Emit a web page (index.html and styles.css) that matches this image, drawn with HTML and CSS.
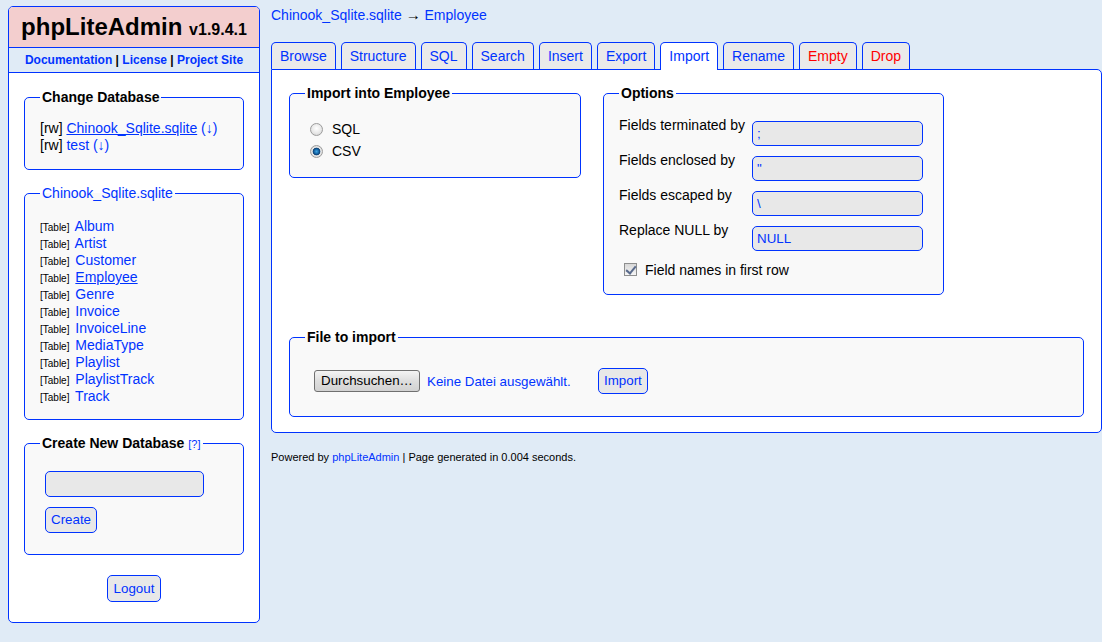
FILE: index.html
```html
<!DOCTYPE html>
<html>
    <head>
        <meta charset="UTF-8">
        <title>Chinook_Sqlite.sqlite - phpLiteAdmin</title>
        <link rel="stylesheet" href="styles.css">
    </head>
    <body>
        <div class="leftnav">
            <h1>phpLiteAdmin <span class="version">v1.9.4.1</span></h1>
            <div class="headerlinks"><a href="#">Documentation</a> | <a href="#">License</a> | <a href="#">Project Site</a></div>
            <div class="navbody">
                <fieldset>
                    <legend>Change Database</legend>
                    <div class="line">[rw] <a href="#" class="current">Chinook_Sqlite.sqlite</a> <a href="#">(<span class="arrow">&darr;</span>)</a></div>
                    <div class="line">[rw] <a href="#">test</a> <a href="#">(<span class="arrow">&darr;</span>)</a></div>
                </fieldset>

                <fieldset class="tables">
                    <legend class="plain"><a href="#">Chinook_Sqlite.sqlite</a></legend>
                    <div class="line"><span class="tag">[Table]</span> <a href="#">Album</a></div>
                    <div class="line"><span class="tag">[Table]</span> <a href="#">Artist</a></div>
                    <div class="line"><span class="tag">[Table]</span> <a href="#">Customer</a></div>
                    <div class="line"><span class="tag">[Table]</span> <a href="#" class="current">Employee</a></div>
                    <div class="line"><span class="tag">[Table]</span> <a href="#">Genre</a></div>
                    <div class="line"><span class="tag">[Table]</span> <a href="#">Invoice</a></div>
                    <div class="line"><span class="tag">[Table]</span> <a href="#">InvoiceLine</a></div>
                    <div class="line"><span class="tag">[Table]</span> <a href="#">MediaType</a></div>
                    <div class="line"><span class="tag">[Table]</span> <a href="#">Playlist</a></div>
                    <div class="line"><span class="tag">[Table]</span> <a href="#">PlaylistTrack</a></div>
                    <div class="line"><span class="tag">[Table]</span> <a href="#">Track</a></div>
                </fieldset>

                <fieldset class="newdb">
                    <legend>Create New Database <a href="#" class="help">[?]</a></legend>
                    <input type="text" class="newdb-input">
                    <button class="btn">Create</button>
                </fieldset>

                <div class="logout"><button class="btn">Logout</button></div>
            </div>
        </div>

        <div class="content">
            <div class="crumbs"><a href="#">Chinook_Sqlite.sqlite</a> <span class="arrow">&rarr;</span> <a href="#">Employee</a></div>

            <div class="tabs">
                <a href="#" class="tab">Browse</a>
                <a href="#" class="tab">Structure</a>
                <a href="#" class="tab">SQL</a>
                <a href="#" class="tab">Search</a>
                <a href="#" class="tab">Insert</a>
                <a href="#" class="tab">Export</a>
                <a href="#" class="tab active">Import</a>
                <a href="#" class="tab">Rename</a>
                <a href="#" class="tab warning">Empty</a>
                <a href="#" class="tab warning">Drop</a>
            </div>

            <div class="main">
                <div class="import-row">
                    <fieldset class="import-type">
                        <legend>Import into Employee</legend>
                        <label class="radio-row"><input type="radio" name="type" class="radio"> SQL</label>
                        <label class="radio-row"><input type="radio" name="type" class="radio" checked> CSV</label>
                    </fieldset>

                    <fieldset class="options">
                        <legend>Options</legend>
                        <div class="opt-grid">
                            <div class="opt-label">Fields terminated by</div>
                            <input type="text" class="opt-input" value=";">
                            <div class="opt-label">Fields enclosed by</div>
                            <input type="text" class="opt-input" value="&quot;">
                            <div class="opt-label">Fields escaped by</div>
                            <input type="text" class="opt-input" value="\">
                            <div class="opt-label">Replace NULL by</div>
                            <input type="text" class="opt-input" value="NULL">
                        </div>
                        <label class="check-row"><input type="checkbox" class="check" checked> Field names in first row</label>
                    </fieldset>
                </div>

                <fieldset class="file">
                    <legend>File to import</legend>
                    <div class="file-row">
                        <div class="filebox">
                            <span class="browse">Durchsuchen&hellip;</span>
                            <span class="nofile">Keine Datei ausgewählt.</span>
                        </div>
                        <button class="btn">Import</button>
                    </div>
                </fieldset>
            </div>

            <div class="footer">Powered by <a href="#">phpLiteAdmin</a> | Page generated in 0.004 seconds.</div>
        </div>
    </body>
</html>
```

FILE: styles.css
```css
*{
    box-sizing: border-box;
}
body{
    margin: 0;
    padding: 6px 0 0 8px;
    background-color: #e0ebf6;
    font-family: "Liberation Sans", Arial, sans-serif;
    font-size: 14px;
    color: #000;
    display: flex;
    align-items: flex-start;
    gap: 11px;
}
a{
    color: #03f;
    text-decoration: none;
}
a.current{
    text-decoration: underline;
}
.arrow{
    line-height: 1;
}

/* left navigation */
.leftnav{
    width: 252px;
    background-color: #fff;
    border: 1px solid #03f;
    border-radius: 5px;
}
.leftnav h1{
    margin: 0;
    padding: 5px;
    height: 40px;
    font-size: 24px;
    line-height: 30px;
    text-align: center;
    background-color: #f3cece;
    border-radius: 4px 4px 0 0;
}
.leftnav h1 .version{
    font-size: 16px;
    line-height: 1;
}
.headerlinks{
    padding: 5px 15px;
    font-size: 12px;
    line-height: 14px;
    font-weight: bold;
    text-align: center;
    background-color: #e0ebf6;
    border-top: 1px solid #03f;
    border-bottom: 1px solid #03f;
}
.navbody{
    padding: 16px 15px 20px;
}
fieldset{
    margin: 0;
    padding: 15px;
    border: 1px solid #03f;
    border-radius: 5px;
    background-color: #f9f9f9;
    min-width: 0;
}
legend{
    padding: 0 2px;
    font-weight: bold;
    line-height: 16px;
}
legend.plain{
    font-weight: normal;
}
.navbody fieldset{
    margin-bottom: 15px;
}
.line{
    height: 17px;
    line-height: 17px;
}
.tables{
    padding-top: 17px;
    padding-bottom: 14px;
}
.tag{
    font-size: 10px;
    line-height: 1;
    margin-right: 2px;
}
.help{
    font-size: 11px;
    font-weight: normal;
    line-height: 1;
}
.newdb{
    padding-bottom: 21px;
}
.newdb-input{
    display: block;
    width: 159px;
    height: 26px;
    margin: 5px 0 10px 5px;
    border: 1px solid #03f;
    border-radius: 5px;
    background-color: #e8e8e8;
}
.newdb .btn{
    margin-left: 5px;
}
.btn{
    font-family: "Liberation Sans", Arial, sans-serif;
    font-size: 13.33px;
    line-height: 16px;
    padding: 4px 5px;
    color: #03f;
    background-color: #e8e8e8;
    border: 1px solid #03f;
    border-radius: 5px;
    cursor: pointer;
}
.logout{
    margin-top: 20px;
    text-align: center;
}
.logout .btn{
    padding: 5px 6px 4px;
}

/* right side */
.content{
    flex: 1;
}
.crumbs{
    padding-top: 1px;
    height: 17px;
    line-height: 16px;
}
.crumbs .arrow{
    font-size: 15px;
}
.tabs{
    display: flex;
    align-items: flex-end;
    margin-top: 19px;
}
.tab{
    display: block;
    padding: 5px 8px;
    margin-right: 5px;
    line-height: 16px;
    background-color: #eaeaea;
    border: 1px solid #03f;
    border-bottom: none;
    border-radius: 5px 5px 0 0;
}
.tab.active{
    position: relative;
    background-color: #fff;
    padding-bottom: 6px;
    margin-bottom: -1px;
}
.tab.warning{
    color: #f00;
}
.main{
    background-color: #fff;
    border: 1px solid #03f;
    border-radius: 0 5px 5px 5px;
    padding: 15px 17px 15px;
}
.import-row{
    display: flex;
    align-items: flex-start;
    gap: 22px;
}
.import-type{
    width: 292px;
    padding-top: 17px;
}
.radio-row{
    display: flex;
    align-items: center;
    height: 22px;
}
.radio{
    appearance: none;
    width: 13px;
    height: 13px;
    margin: 0 9px 0 5px;
    border: 1px solid #9c9c9c;
    border-radius: 50%;
    background: radial-gradient(circle at 50% 40%, #fff 0, #e8e8e8 55%, #cdcdcd 100%);
}
.radio:checked{
    background: radial-gradient(circle at 50% 50%, #3fa3e0 0, #1a6fb0 2px, #0c3e70 3.5px, #e8e8e8 4.2px, #cfcfcf 100%);
}
.options{
    width: 341px;
}
.opt-grid{
    display: grid;
    grid-template-columns: 133px 171px;
    row-gap: 5px;
}
.opt-label{
    padding-top: 1px;
    line-height: 16px;
}
.opt-input{
    width: 171px;
    height: 25px;
    margin-top: 5px;
    padding: 0 4px;
    font-family: "Liberation Sans", Arial, sans-serif;
    font-size: 13.33px;
    color: #03f;
    background-color: #e8e8e8;
    border: 1px solid #03f;
    border-radius: 5px;
}
.check-row{
    display: flex;
    align-items: center;
    height: 19px;
    margin-top: 9px;
}
.check{
    appearance: none;
    position: relative;
    width: 13px;
    height: 13px;
    margin: 0 8px 0 5px;
    border: 1px solid #8e8f8f;
    background: linear-gradient(#d8d8d8, #f6f6f6);
}
.check:checked::after{
    content: "";
    position: absolute;
    left: 3px;
    top: 0px;
    width: 4px;
    height: 8px;
    border: solid #5a6b8c;
    border-width: 0 2px 2px 0;
    transform: rotate(40deg);
}
.file{
    margin-top: 34px;
}
.file-row{
    display: flex;
    align-items: center;
    margin: 8px 0 7px 9px;
}
.filebox{
    width: 280px;
    display: flex;
    align-items: center;
    gap: 7px;
    font-size: 13.33px;
}
.browse{
    width: 106px;
    height: 22px;
    line-height: 20px;
    text-align: center;
    color: #000;
    border: 1px solid #707070;
    border-radius: 3px;
    background: linear-gradient(#f4f4f4, #dedede 50%, #d2d2d2);
}
.nofile{
    color: #03f;
}
.file-row .btn{
    margin-left: 4px;
}
.footer{
    margin-top: 18px;
    font-size: 11px;
    line-height: 13px;
}
```
